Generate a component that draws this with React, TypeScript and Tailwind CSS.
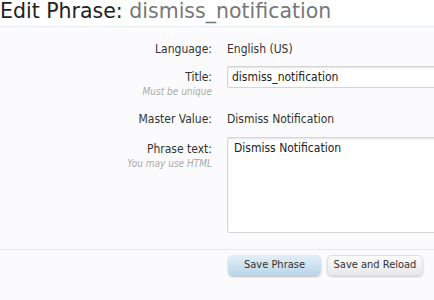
import React from "react";

const font = { fontFamily: '"DejaVu Sans Condensed", "DejaVu Sans", Tahoma, sans-serif' };

function Row({ label, hint, children, className = "" }: { label: string; hint?: string; children: React.ReactNode; className?: string }) {
  return (
    <div className={"flex " + className}>
      <div className="w-[212px] shrink-0 text-right">
        <div className="text-[12px] leading-[15px] text-[#333]">{label}</div>
        {hint && <div className="text-[10px] leading-[12px] italic text-[#aaa] mt-[1px]">{hint}</div>}
      </div>
      <div className="pl-[15px] flex-1 min-w-0">{children}</div>
    </div>
  );
}

export default function App() {
  return (
    <div className="w-[434px] h-[300px] overflow-hidden bg-[#fbfbfd]" style={font}>
      <div className="h-[27px] border-b border-[#e6eef0] bg-white">
        <h1
          className="text-[20.5px] leading-[22px] whitespace-nowrap text-[#222]"
          style={{ fontFamily: '"DejaVu Sans", Tahoma, sans-serif' }}
        >
          Edit Phrase: <span className="text-[#777]">dismiss_notification</span>
        </h1>
      </div>
      <div className="pt-[15px]">
        <Row label="Language:">
          <div className="text-[12px] leading-[15px] text-[#333]">English (US)</div>
        </Row>
        <Row label="Title:" hint="Must be unique" className="mt-[13px]">
          <div className="-mt-[4px] h-[22px] w-[260px] border border-[#d5d5d5] bg-white rounded-[2px] shadow-[inset_0_1px_2px_rgba(0,0,0,0.12)] pl-[4px] text-[12px] leading-[20px] text-[#222]">
            dismiss_notification
          </div>
        </Row>
        <Row label="Master Value:" className="mt-[14px]">
          <div className="text-[12px] leading-[15px] text-[#333]">Dismiss Notification</div>
        </Row>
        <Row label="Phrase text:" hint="You may use HTML" className="mt-[15px]">
          <div className="-mt-[5px] h-[96px] w-[260px] border border-[#d5d5d5] bg-white rounded-[2px] shadow-[inset_0_1px_2px_rgba(0,0,0,0.12)] pl-[6px] pt-[3px] text-[12px] leading-[15px] text-[#222]">
            Dismiss Notification
          </div>
        </Row>
      </div>
      <div className="mt-[16px] border-t border-[#e8e8ec] pt-[5px] flex pl-[228px] gap-[6px]">
        <button className="h-[21px] w-[93px] rounded-[5px] bg-gradient-to-b from-[#e3eff7] to-[#b8d5e8] shadow-[0_1px_2px_rgba(0,0,0,0.25)] text-[11px] text-[#333]">
          Save Phrase
        </button>
        <button className="h-[21px] w-[96px] rounded-[5px] bg-gradient-to-b from-[#fbfbfb] to-[#e8e8ea] border border-[#e0e0e0] shadow-[0_1px_2px_rgba(0,0,0,0.2)] text-[11px] text-[#333]">
          Save and Reload
        </button>
      </div>
    </div>
  );
}
